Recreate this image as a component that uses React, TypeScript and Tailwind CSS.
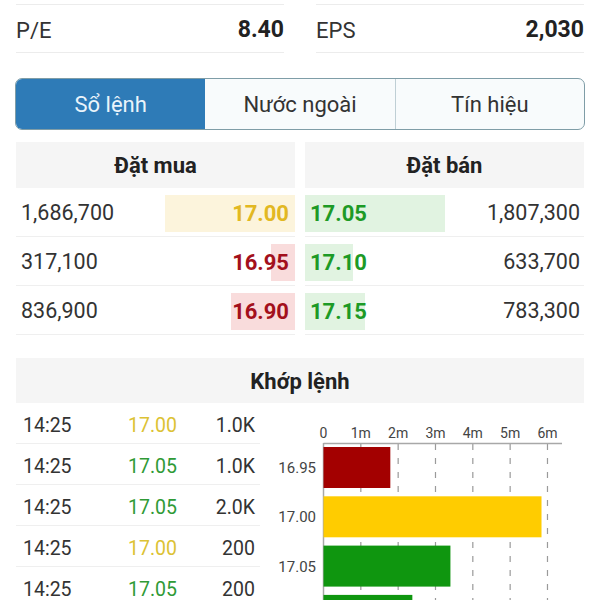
import React from "react";

type BuyRow = { vol: string; price: string; bar: number; tone: "yellow" | "red" };
type SellRow = { vol: string; price: string; bar: number };

const buys: BuyRow[] = [
  { vol: "1,686,700", price: "17.00", bar: 130, tone: "yellow" },
  { vol: "317,100", price: "16.95", bar: 24, tone: "red" },
  { vol: "836,900", price: "16.90", bar: 64, tone: "red" },
];

const sells: SellRow[] = [
  { vol: "1,807,300", price: "17.05", bar: 140 },
  { vol: "633,700", price: "17.10", bar: 48 },
  { vol: "783,300", price: "17.15", bar: 60 },
];

const trades = [
  { t: "14:25", p: "17.00", v: "1.0K", c: "y" },
  { t: "14:25", p: "17.05", v: "1.0K", c: "g" },
  { t: "14:25", p: "17.05", v: "2.0K", c: "g" },
  { t: "14:25", p: "17.00", v: "200", c: "y" },
  { t: "14:25", p: "17.05", v: "200", c: "g" },
];

function Chart() {
  const x0 = 63.5;
  const unit = 37.33;
  const ticks = ["0", "1m", "2m", "3m", "4m", "5m", "6m"];
  const bars = [
    { label: "16.95", v: 1.79, color: "#a30000" },
    { label: "17.00", v: 5.84, color: "#ffcc00" },
    { label: "17.05", v: 3.4, color: "#0f960f" },
    { label: "17.10", v: 2.38, color: "#0f960f" },
  ];
  return (
    <svg width="324" height="200" viewBox="0 0 324 200" className="block">
      {ticks.map((t, i) =>
        i === 0 ? null : (
          <line
            key={"g" + t}
            x1={x0 + unit * i}
            x2={x0 + unit * i}
            y1={41}
            y2={200}
            stroke="#9a9a9a"
            strokeWidth={1.2}
            strokeDasharray="6 8"
          />
        )
      )}
      <line x1={x0} x2={302} y1={40.5} y2={40.5} stroke="#a8a8a8" strokeWidth={1.5} />
      <line x1={x0} x2={x0} y1={40} y2={200} stroke="#a8a8a8" strokeWidth={1.5} />
      {ticks.map((t, i) => (
        <text
          key={t}
          x={x0 + unit * i}
          y={35}
          textAnchor="middle"
          fontSize={14}
          fill="#444"
          fontFamily="Roboto, sans-serif"
        >
          {t}
        </text>
      ))}
      {bars.map((b, i) => {
        const y = 44 + 49.3 * i;
        return (
          <g key={b.label}>
            <rect x={x0} y={y} width={b.v * unit} height={41} fill={b.color} />
            <text
              x={56}
              y={y + 26}
              textAnchor="end"
              fontSize={15}
              fill="#444"
              fontFamily="Roboto, sans-serif"
            >
              {b.label}
            </text>
          </g>
        );
      })}
    </svg>
  );
}

export default function App() {
  return (
    <div className="min-h-[600px] w-[600px] overflow-hidden bg-white font-['Roboto',sans-serif] text-[#333]">
      {/* stats */}
      <div className="grid grid-cols-2 gap-8 px-4 pt-[4px]">
        <div className="flex h-[49px] items-center justify-between border-y border-[#ececec] pt-[3px]">
          <span className="text-[22px] text-[#333]">P/E</span>
          <span className="text-[23px] font-bold text-[#222]">8.40</span>
        </div>
        <div className="flex h-[49px] items-center justify-between border-y border-[#ececec] pt-[3px]">
          <span className="text-[22px] text-[#333]">EPS</span>
          <span className="text-[23px] font-bold text-[#222]">2,030</span>
        </div>
      </div>

      {/* tabs */}
      <div className="mx-[15px] mt-[25px] grid h-[52px] grid-cols-3 overflow-hidden rounded-[7px] border border-[#7f9da7] bg-[#f8fbfc]">
        <div className="flex items-center justify-center bg-[#2e7bb7] text-[22px] text-[#eaf4fb]">Sổ lệnh</div>
        <div className="flex items-center justify-center text-[22px] text-[#333]">Nước ngoài</div>
        <div className="flex items-center justify-center border-l border-[#bfcfd5] text-[22px] text-[#333]">Tín hiệu</div>
      </div>

      {/* order book */}
      <div className="mt-3 grid grid-cols-2 gap-[10px] px-4">
        <div>
          <div className="flex h-[46px] items-center justify-center bg-[#f5f5f5] text-[22px] font-bold text-[#222]">Đặt mua</div>
          {buys.map((r) => (
            <div key={r.vol} className="flex h-[49px] items-center justify-between border-b border-[#efefef] pt-[3px]">
              <span className="pl-[5px] text-[21.5px] text-[#333]">{r.vol}</span>
              <div className="relative flex h-[37px] items-center justify-end">
                <div
                  className={"absolute right-0 top-0 h-full " + (r.tone === "yellow" ? "bg-[#fcf4dc]" : "bg-[#f9dcdc]")}
                  style={{ width: r.bar }}
                />
                <span
                  className={
                    "relative pr-[6px] text-[22px] font-bold " +
                    (r.tone === "yellow" ? "text-[#e2b822]" : "text-[#a3101c]")
                  }
                >
                  {r.price}
                </span>
              </div>
            </div>
          ))}
        </div>
        <div>
          <div className="flex h-[46px] items-center justify-center bg-[#f5f5f5] text-[22px] font-bold text-[#222]">Đặt bán</div>
          {sells.map((r) => (
            <div key={r.vol} className="flex h-[49px] items-center justify-between border-b border-[#efefef] pt-[3px]">
              <div className="relative flex h-[37px] items-center">
                <div className="absolute left-0 top-0 h-full bg-[#e1f3e1]" style={{ width: r.bar }} />
                <span className="relative pl-[5px] text-[22px] font-bold text-[#1d9a26]">{r.price}</span>
              </div>
              <span className="pr-[4px] text-[21.5px] text-[#333]">{r.vol}</span>
            </div>
          ))}
        </div>
      </div>

      {/* matched orders */}
      <div className="mx-4 mt-[23px] flex h-[45px] items-center justify-center bg-[#f5f5f5] pt-[2px] text-[22px] font-bold text-[#222]">
        Khớp lệnh
      </div>
      <div className="flex pl-4">
        <div className="w-[244px] shrink-0">
          {trades.map((r, i) => (
            <div key={i} className="flex h-[41px] items-center border-b border-[#efefef] pt-[6px] text-[19.5px]">
              <span className="w-[112px] pl-[7px] text-[#333]">{r.t}</span>
              <span className={r.c === "y" ? "text-[#dcc234]" : "text-[#2f9a36]"}>{r.p}</span>
              <span className="flex-1 pr-[5px] text-right text-[#333]">{r.v}</span>
            </div>
          ))}
        </div>
        <Chart />
      </div>
    </div>
  );
}
